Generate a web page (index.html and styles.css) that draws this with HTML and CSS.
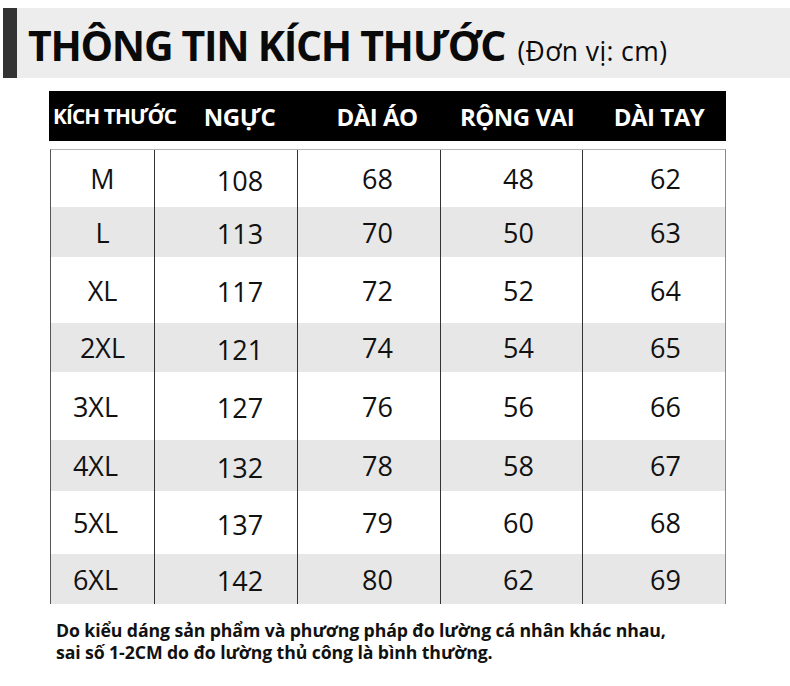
FILE: index.html
```html
<!DOCTYPE html>
<html lang="vi">
<head>
<meta charset="utf-8">
<link rel="stylesheet" href="styles.css">
</head>
<body>
<header class="title-band">
  <h1 class="title">THÔNG TIN KÍCH THƯỚC <span class="unit">(Đơn vị: cm)</span></h1>
</header>
<section class="size-table">
  <div class="head-row">
    <div class="hcell first">KÍCH THƯỚC</div>
    <div class="hcell c2">NGỰC</div>
    <div class="hcell c3">DÀI ÁO</div>
    <div class="hcell c4">RỘNG VAI</div>
    <div class="hcell c5">DÀI TAY</div>
  </div>
  <div class="body">
    <div class="row r1"><div class="cell c1">M</div><div class="cell c2">108</div><div class="cell c3">68</div><div class="cell c4">48</div><div class="cell c5">62</div></div>
    <div class="row r2 alt"><div class="cell c1">L</div><div class="cell c2">113</div><div class="cell c3">70</div><div class="cell c4">50</div><div class="cell c5">63</div></div>
    <div class="row r3"><div class="cell c1">XL</div><div class="cell c2">117</div><div class="cell c3">72</div><div class="cell c4">52</div><div class="cell c5">64</div></div>
    <div class="row r4 alt"><div class="cell c1">2XL</div><div class="cell c2">121</div><div class="cell c3">74</div><div class="cell c4">54</div><div class="cell c5">65</div></div>
    <div class="row r5"><div class="cell c1 shift">3XL</div><div class="cell c2">127</div><div class="cell c3">76</div><div class="cell c4">56</div><div class="cell c5">66</div></div>
    <div class="row r6 alt"><div class="cell c1 shift">4XL</div><div class="cell c2">132</div><div class="cell c3">78</div><div class="cell c4">58</div><div class="cell c5">67</div></div>
    <div class="row r7"><div class="cell c1 shift">5XL</div><div class="cell c2">137</div><div class="cell c3">79</div><div class="cell c4">60</div><div class="cell c5">68</div></div>
    <div class="row r8 alt"><div class="cell c1 shift">6XL</div><div class="cell c2">142</div><div class="cell c3">80</div><div class="cell c4">62</div><div class="cell c5">69</div></div>
  </div>
</section>
<p class="note">Do kiểu dáng sản phẩm và phương pháp đo lường cá nhân khác nhau,<br>sai số 1-2CM do đo lường thủ công là bình thường.</p>
</body>
</html>
```

FILE: styles.css
```css
* { box-sizing: border-box; }
html, body { margin: 0; padding: 0; background: #ffffff; }
body {
  width: 790px;
  height: 686px;
  overflow: hidden;
  font-family: "Open Sans", "Noto Sans", sans-serif;
  color: #111;
}

.title-band {
  margin: 8px 0 0 3px;
  height: 70px;
  background: #ededed;
  border-left: 14px solid #333333;
  display: flex;
  align-items: center;
  padding-left: 11px;
}
.title {
  margin: 0;
  font-size: 41px;
  font-weight: 700;
  color: #0a0a0a;
  letter-spacing: -1.3px;
  line-height: 1;
  padding-top: 4px;
  white-space: nowrap;
}
.unit {
  font-size: 26.5px;
  font-weight: 400;
  letter-spacing: 0.4px;
  margin-left: 3px;
}

.size-table {
  margin: 13px 0 0 49px;
  width: 677px;
}
.head-row {
  display: grid;
  grid-template-columns: 105px 143px 143px 142px 144px;
  height: 50px;
  background: #000;
  color: #fff;
  align-items: center;
}
.hcell {
  font-weight: 700;
  font-size: 24px;
  letter-spacing: -0.5px;
  text-align: center;
  white-space: nowrap;
}
.hcell.first {
  font-size: 20.8px;
  letter-spacing: -0.9px;
  text-align: left;
  padding-left: 4px;
  overflow: visible;
}
.body {
  margin: 8px 0 0 1px;
  width: 676px;
  border-top: 1px solid #b5b5b5;
  border-left: 1px solid #555;
  border-right: 1px solid #888;
}
.row {
  display: grid;
  grid-template-columns: 104px 143px 143px 142px 143px;
  align-items: center;
}
.row.alt { background: #e7e7e7; }
.r1 { height: 57px; }
.r2 { height: 50px; }
.r3 { height: 66px; }
.r4 { height: 49px; }
.r5 { height: 68px; }
.r6 { height: 51px; }
.r7 { height: 63px; }
.r8 { height: 50px; }
.cell {
  height: 100%;
  display: flex;
  align-items: center;
  justify-content: center;
  font-size: 27px;
  font-weight: 400;
  color: #111;
  border-right: 1px solid #333;
}
.cell.c5 { border-right: none; }
.cell.shift { padding-right: 14px; }
.cell.c2 { padding-left: 28px; padding-top: 3px; }
.cell.c3 { padding-left: 17px; }
.cell.c4 { padding-left: 14px; }
.cell.c5 { padding-left: 22px; }
.hcell.c2 { padding-left: 28px; padding-top: 1px; }
.hcell.c3 { padding-left: 17px; padding-top: 1px; }
.hcell.c4 { padding-left: 12px; padding-top: 1px; }
.hcell.c5 { padding-left: 10px; padding-top: 1px; }

.note {
  margin: 15px 0 0 56px;
  font-size: 17.7px;
  font-weight: 700;
  line-height: 22px;
  color: #111;
  letter-spacing: -0.1px;
}
```
